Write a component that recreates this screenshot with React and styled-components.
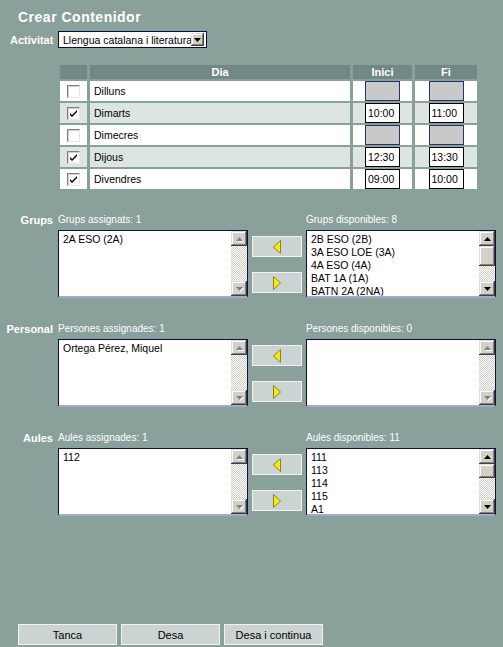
import React from "react"
import styled, { createGlobalStyle } from "styled-components"

const days = [
  { name: "Dilluns", checked: false },
  { name: "Dimarts", checked: true, start: "10:00", end: "11:00" },
  { name: "Dimecres", checked: false },
  { name: "Dijous", checked: true, start: "12:30", end: "13:30" },
  { name: "Divendres", checked: true, start: "09:00", end: "10:00" },
]

const sections = [
  {
    label: "Grups",
    assignedTitle: "Grups assignats: 1",
    assigned: ["2A ESO (2A)"],
    availableTitle: "Grups disponibles: 8",
    available: ["2B ESO (2B)", "3A ESO LOE (3A)", "4A ESO (4A)", "BAT 1A (1A)", "BATN 2A (2NA)"],
    thumb: 20,
  },
  {
    label: "Personal",
    assignedTitle: "Persones assignades: 1",
    assigned: ["Ortega Pérez, Miquel"],
    availableTitle: "Persones disponibles: 0",
    available: [],
  },
  {
    label: "Aules",
    assignedTitle: "Aules assignades: 1",
    assigned: ["112"],
    availableTitle: "Aules disponibles: 11",
    available: ["111", "113", "114", "115", "A1"],
    thumb: 14,
  },
]

function ScrollArrow({ up, enabled }) {
  return (
    <ArrowSvg width="7" height="4" viewBox="0 0 7 4" $enabled={enabled}>
      <polygon points={up ? "3.5,0 7,4 0,4" : "0,0 7,0 3.5,4"} />
    </ArrowSvg>
  )
}

function Scrollbar({ thumb }) {
  const enabled = !!thumb
  return (
    <ScrollTrack>
      <ScrollButton>
        <ScrollArrow up enabled={enabled} />
      </ScrollButton>
      {enabled && <ScrollButton style={{ height: thumb }} />}
      <TrackSpace />
      <ScrollButton>
        <ScrollArrow enabled={enabled} />
      </ScrollButton>
    </ScrollTrack>
  )
}

function ListBox({ items, thumb }) {
  return (
    <Box>
      <Items>
        {items.map((item) => (
          <div key={item}>{item}</div>
        ))}
      </Items>
      <Scrollbar thumb={thumb} />
    </Box>
  )
}

function MoveArrow({ right }) {
  return (
    <svg width="10" height="16" viewBox="0 0 10 16">
      <polygon
        points={right ? "1.5,1.5 8.5,8 1.5,14.5" : "8.5,1.5 1.5,8 8.5,14.5"}
        fill="#f6e90c"
        stroke="#8a8420"
        strokeWidth="1"
      />
    </svg>
  )
}

function CheckBox({ checked }) {
  return (
    <Check>
      {checked && (
        <svg width="9" height="9" viewBox="0 0 9 9">
          <path d="M1 4 L3 6 L8 1 L8 3 L3 8 L1 6 Z" fill="#000" />
        </svg>
      )}
    </Check>
  )
}

export default function App() {
  return (
    <>
      <GlobalStyle />
      <Page>
        <Title>Crear Contenidor</Title>
        <ActivityRow>
          <FieldLabel>Activitat</FieldLabel>
          <Select>
            <SelectText>Llengua catalana i literatura</SelectText>
            <SelectButton>
              <svg width="7" height="4" viewBox="0 0 7 4">
                <polygon points="0,0 7,0 3.5,4" fill="#000" />
              </svg>
            </SelectButton>
          </Select>
        </ActivityRow>

        <DayTable>
          <HeadCell />
          <HeadCell>Dia</HeadCell>
          <HeadCell>Inici</HeadCell>
          <HeadCell>Fi</HeadCell>
          {days.map((day, idx) => (
            <React.Fragment key={day.name}>
              <Cell $alt={idx % 2 === 1} $center>
                <CheckBox checked={day.checked} />
              </Cell>
              <Cell $alt={idx % 2 === 1}>{day.name}</Cell>
              <Cell $alt={idx % 2 === 1} $center>
                <TimeInput $empty={!day.start}>{day.start}</TimeInput>
              </Cell>
              <Cell $alt={idx % 2 === 1} $center>
                <TimeInput $empty={!day.end}>{day.end}</TimeInput>
              </Cell>
            </React.Fragment>
          ))}
        </DayTable>

        <Sections>
          {sections.map((s) => (
            <Section key={s.label}>
              <SectionLabel>{s.label}</SectionLabel>
              <ListTitle>{s.assignedTitle}</ListTitle>
              <span />
              <ListTitle>{s.availableTitle}</ListTitle>
              <span />
              <ListBox items={s.assigned} />
              <MoveButtons>
                <FormButton $w={50}>
                  <MoveArrow />
                </FormButton>
                <FormButton $w={50}>
                  <MoveArrow right />
                </FormButton>
              </MoveButtons>
              <ListBox items={s.available} thumb={s.thumb} />
            </Section>
          ))}
        </Sections>

        <Footer>
          <FormButton $w={99}>Tanca</FormButton>
          <FormButton $w={99}>Desa</FormButton>
          <FormButton $w={99}>Desa i continua</FormButton>
        </Footer>
      </Page>
    </>
  )
}

const GlobalStyle = createGlobalStyle`
  html, body {
    margin: 0;
    padding: 0;
  }
  body {
    background: #8aa09b;
    font-family: "Liberation Sans", Arial, sans-serif;
  }
`

const Page = styled.div`
  min-height: 100vh;
  box-sizing: border-box;
  display: flex;
  flex-direction: column;
  background: #8aa09b;
  color: #000;
`

const Title = styled.div`
  padding: 9px 0 0 18px;
  font-size: 14px;
  line-height: 16px;
  font-weight: bold;
  letter-spacing: 0.5px;
  color: #fff;
`

const ActivityRow = styled.div`
  display: flex;
  align-items: center;
  margin-top: 6px;
  padding-left: 10px;
  height: 17px;
`

const FieldLabel = styled.div`
  width: 48px;
  font-size: 11px;
  font-weight: bold;
  color: #fff;
`

const Select = styled.div`
  width: 149px;
  height: 17px;
  box-sizing: border-box;
  display: flex;
  align-items: center;
  background: #fff;
  border: 1px solid #0c0c38;
  padding-right: 2px;
`

const SelectText = styled.div`
  flex: 1;
  overflow: hidden;
  white-space: nowrap;
  font-size: 10.5px;
  padding-left: 4px;
`

const SelectButton = styled.div`
  width: 13px;
  height: 13px;
  box-sizing: border-box;
  display: flex;
  align-items: center;
  justify-content: center;
  background: #d4d0c8;
  box-shadow: inset -1px -1px #404040, inset 1px 1px #dfdfdf,
    inset -2px -2px #808080, inset 2px 2px #fff;
`

const DayTable = styled.div`
  display: grid;
  grid-template-columns: 27px 260px 59px 62px;
  grid-template-rows: 14px;
  grid-auto-rows: 20px;
  column-gap: 3px;
  row-gap: 2px;
  margin: 17px 0 0 60px;
  width: max-content;
`

const HeadCell = styled.div`
  background: #718884;
  color: #fff;
  font-size: 11px;
  font-weight: bold;
  line-height: 14px;
  text-align: center;
`

const Cell = styled.div`
  display: flex;
  align-items: center;
  justify-content: ${(p) => (p.$center ? "center" : "flex-start")};
  padding-left: ${(p) => (p.$center ? 0 : 4)}px;
  background: ${(p) => (p.$alt ? "#dde5e3" : "#fff")};
  font-size: 10.5px;
`

const Check = styled.div`
  width: 13px;
  height: 13px;
  box-sizing: border-box;
  display: flex;
  align-items: center;
  justify-content: center;
  background: #fff;
  border: 1px solid;
  border-color: #808080 #e8e8e8 #e8e8e8 #808080;
  box-shadow: inset 1px 1px #d0d0d0;
`

const TimeInput = styled.div`
  width: 35px;
  height: 20px;
  box-sizing: border-box;
  padding-left: 2px;
  line-height: 18px;
  font-size: 10.5px;
  background: ${(p) => (p.$empty ? "#c9c9c9" : "#fff")};
  border: 1px solid ${(p) => (p.$empty ? "#26306e" : "#000")};
`

const Sections = styled.div`
  display: flex;
  flex-direction: column;
  gap: 23px;
  margin-top: 23px;
`

const Section = styled.div`
  display: grid;
  grid-template-columns: 58px 190px 58px 190px;
  grid-template-rows: 16px 68px;
  row-gap: 2px;
`

const SectionLabel = styled.div`
  text-align: right;
  padding-right: 5px;
  font-size: 11px;
  font-weight: bold;
  line-height: 16px;
  color: #fff;
`

const ListTitle = styled.div`
  font-size: 10px;
  line-height: 16px;
  color: #fff;
  white-space: nowrap;
`

const Box = styled.div`
  display: flex;
  box-sizing: border-box;
  background: #fff;
  border: 1px solid #10103c;
  border-bottom: 2px solid #a6a9cf;
`

const Items = styled.div`
  flex: 1;
  padding: 2px 0 0 4px;
  font-size: 10.5px;
  line-height: 13px;
  overflow: hidden;
  white-space: nowrap;
`

const ScrollTrack = styled.div`
  width: 16px;
  display: flex;
  flex-direction: column;
  background: repeating-conic-gradient(#d4d0c8 0 25%, #fff 0 50%) 0 0 / 2px 2px;
`

const ScrollButton = styled.div`
  width: 16px;
  height: 15px;
  flex-shrink: 0;
  box-sizing: border-box;
  display: flex;
  align-items: center;
  justify-content: center;
  background: #d4d0c8;
  box-shadow: inset -1px -1px #404040, inset 1px 1px #dfdfdf,
    inset -2px -2px #808080, inset 2px 2px #fff;
`

const TrackSpace = styled.div`
  flex: 1;
`

const ArrowSvg = styled.svg`
  fill: ${(p) => (p.$enabled ? "#000" : "#808080")};
  filter: ${(p) => (p.$enabled ? "none" : "drop-shadow(1px 1px 0 #fff)")};
`

const MoveButtons = styled.div`
  display: flex;
  flex-direction: column;
  align-items: center;
  gap: 15px;
  padding-top: 6px;
`

const FormButton = styled.div`
  width: ${(p) => p.$w}px;
  height: 21px;
  box-sizing: border-box;
  display: flex;
  align-items: center;
  justify-content: center;
  background: #cbd4d2;
  border: 1px solid #eef3f2;
  font-size: 11px;
  color: #000;
`

const Footer = styled.div`
  display: flex;
  gap: 4px;
  margin-top: auto;
  padding: 0 0 2px 18px;
`
